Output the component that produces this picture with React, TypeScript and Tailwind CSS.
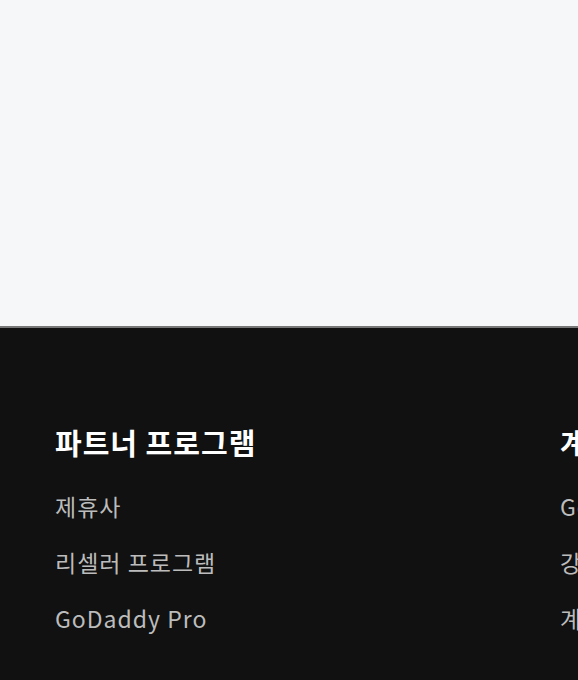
import React from 'react';

const columns = [
  {
    title: '파트너 프로그램',
    links: ['제휴사', '리셀러 프로그램', 'GoDaddy Pro'],
  },
  {
    title: '계정 정보',
    links: ['GoDaddy 계정', '강좌 및 이벤트', '계정 보안'],
  },
];

export default function App() {
  return (
    <div className="flex h-screen flex-col overflow-hidden">
      <div className="h-[326px] shrink-0 bg-[#f5f7f9]" />
      <footer className="flex-1 border-t-2 border-[#777777] bg-[#111111] font-['Noto_Sans_CJK_KR',sans-serif]">
        <div className="flex gap-[135px] pl-[55px] pt-[94px] whitespace-nowrap">
          {columns.map((col) => (
            <div key={col.title} className="flex w-[370px] shrink-0 flex-col">
              <h3 className="text-[29px] font-bold leading-[40px] tracking-[1px] text-white">{col.title}</h3>
              <ul className="mt-[27px] flex flex-col gap-[22px]">
                {col.links.map((link) => (
                  <li key={link} className="text-[23px] leading-[34px] tracking-[1px] text-[#bcbcbc]">
                    {link}
                  </li>
                ))}
              </ul>
            </div>
          ))}
        </div>
      </footer>
    </div>
  );
}
